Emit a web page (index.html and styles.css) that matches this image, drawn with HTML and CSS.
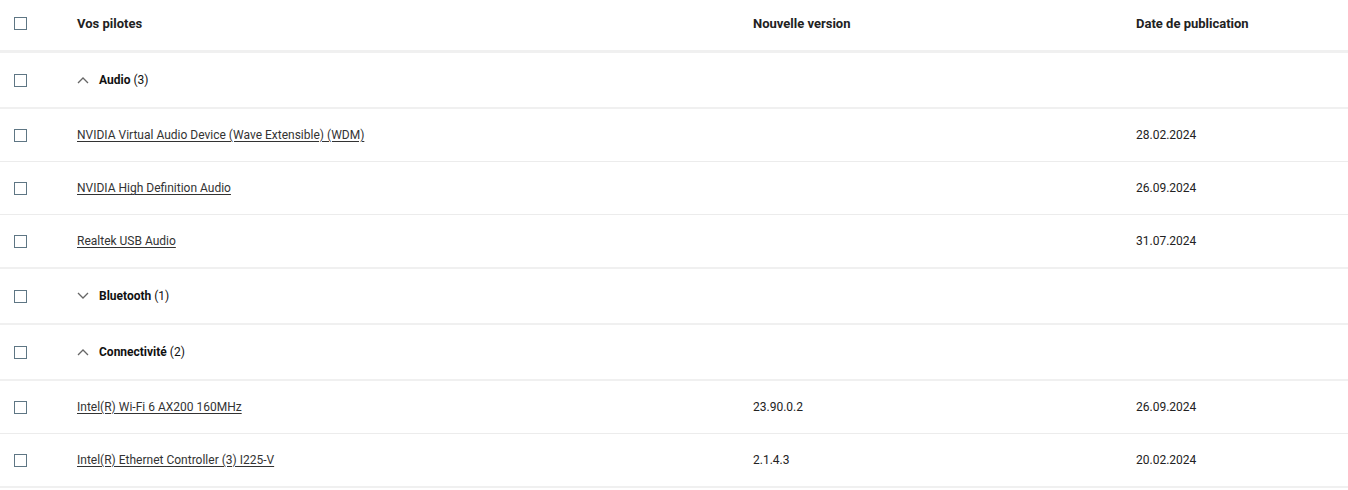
FILE: index.html
```html
<!DOCTYPE html>
<html lang="fr">
<head>
<meta charset="utf-8">
<link rel="stylesheet" href="styles.css">
</head>
<body>
<div class="table">
  <div class="row head">
    <div class="cb"><span class="box"></span></div>
    <div class="cell">Vos pilotes</div>
    <div class="cell">Nouvelle version</div>
    <div class="cell">Date de publication</div>
  </div>
  <div class="row group">
    <div class="cb"><span class="box"></span></div>
    <div class="cell gname"><svg class="chev" viewBox="0 0 12 8"><path d="M1 7 L6 2 L11 7" /></svg><b>Audio</b>&nbsp;(3)</div>
    <div class="cell"></div>
    <div class="cell"></div>
  </div>
  <div class="row item">
    <div class="cb"><span class="box"></span></div>
    <div class="cell"><a href="#">NVIDIA Virtual Audio Device (Wave Extensible) (WDM)</a></div>
    <div class="cell"></div>
    <div class="cell">28.02.2024</div>
  </div>
  <div class="row item">
    <div class="cb"><span class="box"></span></div>
    <div class="cell"><a href="#">NVIDIA High Definition Audio</a></div>
    <div class="cell"></div>
    <div class="cell">26.09.2024</div>
  </div>
  <div class="row item last">
    <div class="cb"><span class="box"></span></div>
    <div class="cell"><a href="#">Realtek USB Audio</a></div>
    <div class="cell"></div>
    <div class="cell">31.07.2024</div>
  </div>
  <div class="row group">
    <div class="cb"><span class="box"></span></div>
    <div class="cell gname"><svg class="chev" viewBox="0 0 12 8"><path d="M1 1 L6 6 L11 1" /></svg><b>Bluetooth</b>&nbsp;(1)</div>
    <div class="cell"></div>
    <div class="cell"></div>
  </div>
  <div class="row group">
    <div class="cb"><span class="box"></span></div>
    <div class="cell gname"><svg class="chev" viewBox="0 0 12 8"><path d="M1 7 L6 2 L11 7" /></svg><b>Connectivité</b>&nbsp;(2)</div>
    <div class="cell"></div>
    <div class="cell"></div>
  </div>
  <div class="row item">
    <div class="cb"><span class="box"></span></div>
    <div class="cell"><a href="#">Intel(R) Wi-Fi 6 AX200 160MHz</a></div>
    <div class="cell">23.90.0.2</div>
    <div class="cell">26.09.2024</div>
  </div>
  <div class="row item last">
    <div class="cb"><span class="box"></span></div>
    <div class="cell"><a href="#">Intel(R) Ethernet Controller (3) I225-V</a></div>
    <div class="cell">2.1.4.3</div>
    <div class="cell">20.02.2024</div>
  </div>
</div>
</body>
</html>
```
FILE: styles.css
```css
html, body {
  margin: 0;
  padding: 0;
  background: #fff;
}
body {
  font-family: Roboto, "Liberation Sans", Arial, sans-serif;
  color: #222;
  font-size: 12px;
}
.table {
  width: 1348px;
}
.row {
  display: grid;
  grid-template-columns: 77px 676px 383px 1fr;
  align-items: center;
  box-sizing: border-box;
}
.head {
  height: 53px;
  border-bottom: 3px solid #f0f0f0;
  font-weight: 700;
  font-size: 13px;
  color: #111;
}
.head .cb, .head .cell {
  position: relative;
  top: -2px;
}
.group {
  height: 56px;
  border-bottom: 2px solid #f0f0f0;
}
.item {
  height: 53px;
  border-bottom: 1px solid #ececec;
}
.item.last {
  height: 54px;
  border-bottom: 2px solid #f0f0f0;
}
.cb {
  padding-left: 14px;
  display: flex;
  align-items: center;
}
.box {
  display: block;
  width: 13px;
  height: 13px;
  box-sizing: border-box;
  border: 1.5px solid #5e7684;
  background: #fff;
}
.cell {
  display: flex;
  align-items: center;
  color: #222;
}
.cell a {
  color: #333;
  text-decoration: underline;
  text-underline-offset: 2px;
}
.gname {
  font-size: 12px;
  color: #111;
}
.gname b {
  font-weight: 700;
}
.chev {
  width: 12px;
  height: 8px;
  margin-right: 10px;
  fill: none;
  stroke: #666;
  stroke-width: 1.3;
}
```
